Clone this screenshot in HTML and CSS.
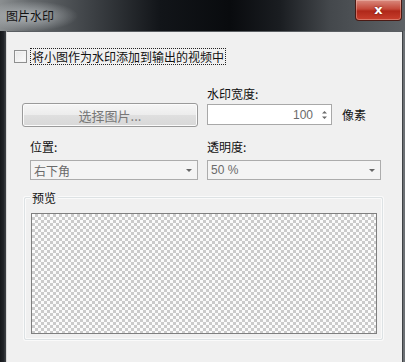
FILE: index.html
```html
<!DOCTYPE html>
<html lang="zh">
<head>
<meta charset="utf-8">
<title>图片水印</title>
<link rel="stylesheet" href="styles.css">
</head>
<body>
<div class="window">
  <div class="titlebar">
    <span class="title">图片水印</span>
    <div class="close"><span>x</span></div>
  </div>
  <div class="client">
    <label class="check-row">
      <span class="checkbox"></span>
      <span class="check-label">将小图作为水印添加到输出的视频中</span>
    </label>
    <div class="grid">
      <div class="cell left-top">
        <div class="button">选择图片...</div>
      </div>
      <div class="cell">
        <div class="label">水印宽度:</div>
        <div class="spin-row">
          <div class="spin"><span class="spin-val">100</span><span class="arrows"><svg width="7" height="12" viewBox="0 0 7 12"><path d="M1 4.5 L3.5 2 L6 4.5Z M1 7.5 L3.5 10 L6 7.5Z" fill="#6a6a6a"/></svg></span></div>
          <span class="unit">像素</span>
        </div>
      </div>
      <div class="cell indent">
        <div class="label sel-label">位置:</div>
        <div class="select"><span>右下角</span><i class="caret"></i></div>
      </div>
      <div class="cell">
        <div class="label sel-label">透明度:</div>
        <div class="select"><span>50 %</span><i class="caret"></i></div>
      </div>
    </div>
    <div class="group">
      <span class="legend">预览</span>
      <div class="preview"></div>
    </div>
  </div>
</div>
</body>
</html>
```
FILE: styles.css
```css
html, body {
  margin: 0;
  padding: 0;
  width: 405px;
  height: 362px;
  overflow: hidden;
  font-family: "Noto Sans CJK SC", "Noto Sans", sans-serif;
  font-size: 12px;
}
.window {
  width: 405px;
  height: 362px;
  display: flex;
  flex-direction: column;
  background: linear-gradient(90deg, #15171a 0, #22252a 4px, #3a3d41 5px, #3a3d41 400px, #15171a 402px, #6c7074 403px);
}
.titlebar {
  height: 31px;
  flex: none;
  display: flex;
  align-items: flex-start;
  justify-content: space-between;
  background:
    radial-gradient(ellipse 48px 15px at 30px 16px, rgba(195,200,203,0.8), rgba(195,200,203,0) 100%),
    linear-gradient(90deg, #8a8e90 0, #666a6d 30px, #3e4246 90px, #121519 160px, #090b0e 230px, #1a1d21 280px, #44484c 330px, #5e6266 405px);
}
.title {
  margin: 8px 0 0 6px;
  color: #121212;
  line-height: 16px;
  font-size: 12px;
}
.close {
  width: 45px;
  height: 20px;
  margin-right: 3px;
  border: 1px solid #4a1a14;
  border-top: none;
  border-radius: 0 0 4px 4px;
  background: linear-gradient(180deg, #d98a7e 0, #c4493a 45%, #b0281a 55%, #c9402e 100%);
  display: flex;
  align-items: center;
  justify-content: center;
  box-shadow: inset 0 0 0 1px rgba(255,220,210,0.35);
}
.close span {
  color: #fff;
  font-family: "DejaVu Sans", sans-serif;
  font-weight: bold;
  font-size: 13px;
  line-height: 13px;
  margin-top: -2px;
  text-shadow: 0 0 2px #5a0f08;
}
.client {
  flex: 1;
  margin: 0 3px 0 6px;
  background: #f0f0f0;
  border-top: 1px solid #5a5e62;
  border-left: 1px solid #d8d8d8;
  display: flex;
  flex-direction: column;
}
.check-row {
  display: flex;
  align-items: center;
  margin: 16px 0 0 7px;
  height: 17px;
}
.checkbox {
  width: 11px;
  height: 11px;
  border: 1px solid #8e8f8f;
  background: linear-gradient(135deg, #e6e6e6, #fdfdfd);
  box-shadow: inset 0 0 0 1px #f4f4f4;
}
.check-label {
  margin-left: 4px;
  padding: 0 1px;
  color: #111;
  line-height: 15px;
  outline: 1px dotted #222;
}
.grid {
  display: grid;
  grid-template-columns: 176px 174px;
  column-gap: 9px;
  row-gap: 14px;
  margin: 21px 0 0 15px;
}
.cell {
  display: flex;
  flex-direction: column;
}
.left-top {
  justify-content: flex-end;
}
.indent {
  margin-left: 8px;
}
.label {
  color: #111;
  line-height: 16px;
  height: 16px;
  margin-bottom: 2px;
}
.sel-label {
  margin-bottom: 5px;
}
.button {
  height: 22px;
  border: 1px solid #9a9a9a;
  border-radius: 3px;
  background: linear-gradient(180deg, #f6f6f6 0, #ececec 50%, #dfdfdf 51%, #d8d8d8 100%);
  box-shadow: inset 0 0 0 1px #fbfbfb;
  color: #777;
  font-size: 13px;
  display: flex;
  align-items: center;
  justify-content: center;
  margin-bottom: -2px;
}
.spin-row {
  display: flex;
  align-items: center;
}
.spin {
  width: 123px;
  height: 19px;
  border: 1px solid #a8a8a8;
  background: #fff;
  display: flex;
  align-items: center;
  justify-content: flex-end;
  color: #6a6a6a;
}
.spin-val {
  font-family: "Liberation Sans", sans-serif;
  font-size: 12px;
  margin-right: 8px;
}
.arrows {
  display: flex;
  margin-right: 3px;
}
.unit {
  margin-left: 10px;
  color: #111;
  font-size: 12px;
}
.select {
  height: 18px;
  border: 1px solid #acacac;
  background: #f4f4f4;
  display: flex;
  align-items: center;
  justify-content: space-between;
  color: #6a6a6a;
  padding-left: 3px;
}
.select span {
  font-family: "Liberation Sans", "Noto Sans CJK SC", sans-serif;
}
.caret {
  width: 0;
  height: 0;
  border-left: 3px solid transparent;
  border-right: 3px solid transparent;
  border-top: 3px solid #666;
  margin-right: 5px;
}
.group {
  margin: 17px 0 0 17px;
  width: 359px;
  height: 143px;
  box-sizing: border-box;
  border: 1px solid #dde2e4;
  box-shadow: inset 0 0 0 1px #fafafa, 0 0 0 1px #fafafa;
  border-radius: 2px;
  position: relative;
  padding: 15px 0 0 6px;
}
.legend {
  position: absolute;
  top: -8px;
  left: 5px;
  padding: 0 2px;
  background: #f0f0f0;
  color: #111;
  line-height: 16px;
}
.preview {
  width: 346px;
  height: 121px;
  box-sizing: border-box;
  border: 1px solid #7f7f7f;
  background-color: #ffffff;
  background-image: conic-gradient(#cbcbcb 0 25%, #fbfbfb 0 50%, #cbcbcb 0 75%, #fbfbfb 0);
  background-size: 6px 6px;
}
```
